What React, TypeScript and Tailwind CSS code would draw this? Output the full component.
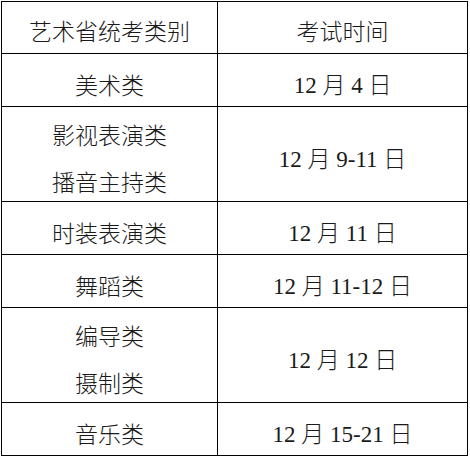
const rows: { name: string[]; date: string; h: string }[] = [
  { name: ["美术类"], date: "12 月 4 日", h: "h-[53px]" },
  { name: ["影视表演类", "播音主持类"], date: "12 月 9-11 日", h: "h-[95px]" },
  { name: ["时装表演类"], date: "12 月 11 日", h: "h-[53px]" },
  { name: ["舞蹈类"], date: "12 月 11-12 日", h: "h-[53px]" },
  { name: ["编导类", "摄制类"], date: "12 月 12 日", h: "h-[95px]" },
  { name: ["音乐类"], date: "12 月 15-21 日", h: "h-[53px]" },
];

export default function App() {
  return (
    <div className="w-[470px] h-[457px] bg-white pl-px pt-px">
      <div
        className="w-[467px] border-l border-t border-r border-black text-[23px] text-[#1a1a1a] font-light"
        style={{ fontFamily: '"Liberation Serif", "Noto Sans CJK SC", serif' }}
      >
        <div className="grid grid-cols-[216px_1fr]">
          <div className="h-[52px] border-r border-b border-black flex items-center justify-center pt-3">
            艺术省统考类别
          </div>
          <div className="h-[52px] border-b border-black flex items-center justify-center pt-3">
            考试时间
          </div>
          {rows.map((r) => (
            <div key={r.date + r.name[0]} className="contents">
              <div
                className={`${r.h} border-r border-b border-black flex flex-col items-center justify-center pt-3 leading-[47px]`}
              >
                {r.name.map((n) => (
                  <span key={n}>{n}</span>
                ))}
              </div>
              <div className={`${r.h} border-b border-black flex items-center justify-center pt-3`}>
                {r.date}
              </div>
            </div>
          ))}
        </div>
      </div>
    </div>
  );
}
